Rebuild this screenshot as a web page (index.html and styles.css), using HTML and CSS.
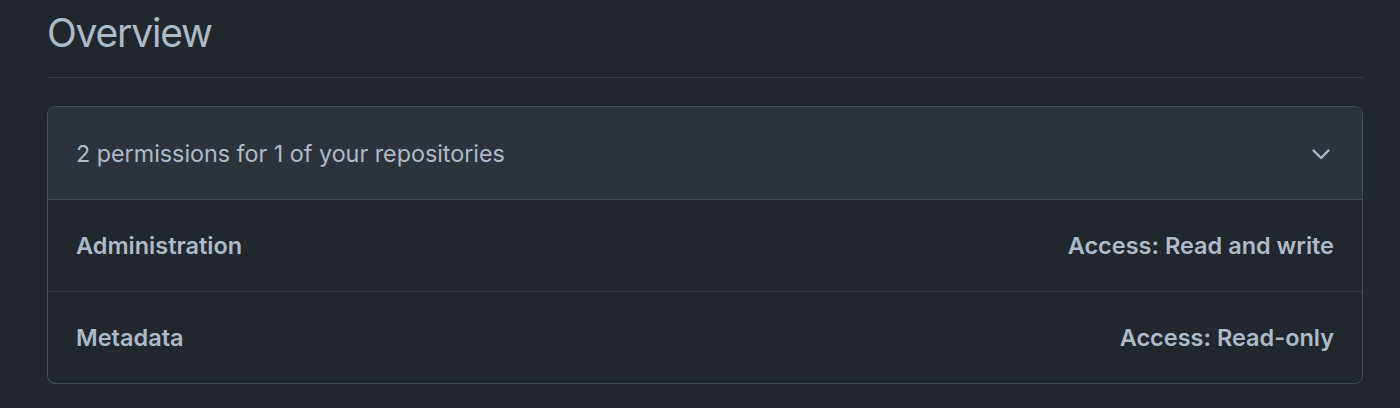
FILE: index.html
```html
<!DOCTYPE html>
<html lang="en">
<head>
<meta charset="utf-8">
<title>Overview</title>
<link rel="stylesheet" href="styles.css">
</head>
<body>
<main class="page">
  <h2 class="subhead">Overview</h2>
  <section class="perm-box">
    <div class="perm-summary">
      <span class="summary-text">2 permissions for 1 of your repositories</span>
      <svg class="chevron" width="20" height="12" viewBox="0 0 20 12" aria-hidden="true"><path d="M2.5 2.5l7.5 7.5 7.5-7.5" fill="none" stroke="currentColor" stroke-width="2.4" stroke-linecap="round" stroke-linejoin="round"/></svg>
    </div>
    <div class="perm-row">
      <span class="perm-name">Administration</span>
      <span class="perm-access">Access: Read and write</span>
    </div>
    <div class="perm-row">
      <span class="perm-name">Metadata</span>
      <span class="perm-access">Access: Read-only</span>
    </div>
  </section>
</main>
</body>
</html>
```
FILE: styles.css
```css
html, body {
  margin: 0;
  padding: 0;
  background: #22272e;
}
body {
  font-family: Inter, "Liberation Sans", sans-serif;
  color: #adbac7;
}
.page {
  padding: 8px 37px 0 47px;
}
.subhead {
  margin: 0;
  font-size: 39px;
  letter-spacing: -1.2px;
  line-height: 50px;
  font-weight: 400;
  padding-bottom: 19px;
  border-bottom: 1px solid #373e47;
  color: #adbac7;
}
.perm-box {
  margin-top: 28px;
  border: 1px solid #444c56;
  border-radius: 8px;
  overflow: hidden;
}
.perm-summary {
  display: flex;
  align-items: center;
  justify-content: space-between;
  height: 91px;
  padding: 1px 31px 0 28px;
  background: #2d333b;
  border-bottom: 1px solid #444c56;
  font-size: 23.3px;
}
.chevron {
  display: block;
  color: #adbac7;
}
.perm-row {
  display: flex;
  align-items: center;
  justify-content: space-between;
  height: 91px;
  padding: 0 28px;
  font-size: 23.5px;
  font-weight: 600;
}
.perm-row + .perm-row {
  border-top: 1px solid #373e47;
}
```
